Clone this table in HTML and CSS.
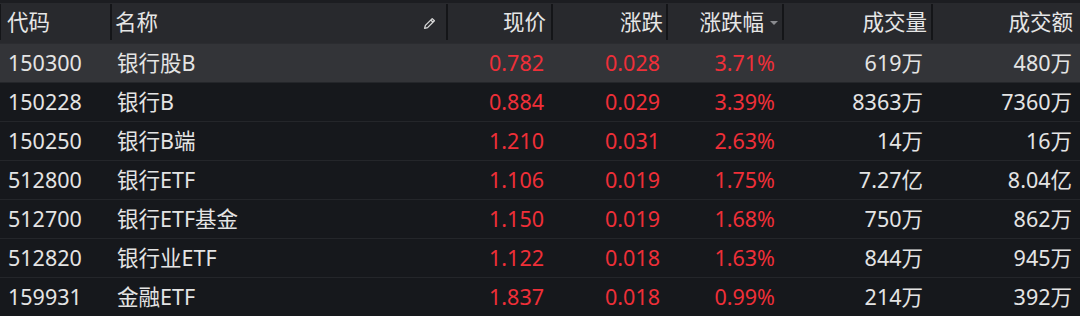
FILE: index.html
```html
<!DOCTYPE html>
<html lang="zh-CN">
<head>
<meta charset="utf-8">
<link rel="stylesheet" href="styles.css">
</head>
<body>
<div class="quote-table">
  <div class="head">
    <div class="hc left c-code">代码</div>
    <div class="hc left c-name">名称
      <svg class="pencil" width="13" height="13" viewBox="0 0 13 13"><path d="M9.2 1.6 L11.4 3.8 L4.6 10.6 L1.6 11.4 L2.4 8.4 Z M7.8 3 L10 5.2" fill="none" stroke="#d8d8d8" stroke-width="1.3" stroke-linejoin="round"/></svg>
    </div>
    <div class="hc right c-price">现价</div>
    <div class="hc right c-chg">涨跌</div>
    <div class="hc right c-pct">涨跌幅<span class="sort"></span></div>
    <div class="hc right c-vol">成交量</div>
    <div class="hc right c-amt">成交额</div>
  </div>
  <div class="row active">
    <div class="c left c-code">150300</div><div class="c left c-name">银行股B</div>
    <div class="c right up c-price">0.782</div><div class="c right up c-chg">0.028</div><div class="c right up c-pct">3.71%</div>
    <div class="c right c-vol">619万</div><div class="c right c-amt">480万</div>
  </div>
  <div class="row">
    <div class="c left c-code">150228</div><div class="c left c-name">银行B</div>
    <div class="c right up c-price">0.884</div><div class="c right up c-chg">0.029</div><div class="c right up c-pct">3.39%</div>
    <div class="c right c-vol">8363万</div><div class="c right c-amt">7360万</div>
  </div>
  <div class="row">
    <div class="c left c-code">150250</div><div class="c left c-name">银行B端</div>
    <div class="c right up c-price">1.210</div><div class="c right up c-chg">0.031</div><div class="c right up c-pct">2.63%</div>
    <div class="c right c-vol">14万</div><div class="c right c-amt">16万</div>
  </div>
  <div class="row">
    <div class="c left c-code">512800</div><div class="c left c-name">银行ETF</div>
    <div class="c right up c-price">1.106</div><div class="c right up c-chg">0.019</div><div class="c right up c-pct">1.75%</div>
    <div class="c right c-vol">7.27亿</div><div class="c right c-amt">8.04亿</div>
  </div>
  <div class="row">
    <div class="c left c-code">512700</div><div class="c left c-name">银行ETF基金</div>
    <div class="c right up c-price">1.150</div><div class="c right up c-chg">0.019</div><div class="c right up c-pct">1.68%</div>
    <div class="c right c-vol">750万</div><div class="c right c-amt">862万</div>
  </div>
  <div class="row">
    <div class="c left c-code">512820</div><div class="c left c-name">银行业ETF</div>
    <div class="c right up c-price">1.122</div><div class="c right up c-chg">0.018</div><div class="c right up c-pct">1.63%</div>
    <div class="c right c-vol">844万</div><div class="c right c-amt">945万</div>
  </div>
  <div class="row">
    <div class="c left c-code">159931</div><div class="c left c-name">金融ETF</div>
    <div class="c right up c-price">1.837</div><div class="c right up c-chg">0.018</div><div class="c right up c-pct">0.99%</div>
    <div class="c right c-vol">214万</div><div class="c right c-amt">392万</div>
  </div>
</div>
</body>
</html>
```
FILE: styles.css
```css
html, body {
  margin: 0;
  padding: 0;
  background: #16181c;
}
.quote-table {
  width: 1080px;
  font-family: "Noto Sans", "Noto Sans CJK SC", sans-serif;
  font-size: 21.5px;
  color: #e4e4e4;
}
.head, .row {
  display: grid;
  grid-template-columns: 112px 336px 105px 115px 116px 149px 1fr;
}
.head {
  height: 40px;
  border-top: 3px solid #1c1d21;
  background: #28292d;
}
.hc {
  display: flex;
  align-items: center;
  margin: 1px 0 3px;
  border-right: 2px solid #141518;
  line-height: 1;
  color: #e6e6e6;
}
.hc.c-code { border-left: 1px solid #141518; }
.hc.c-amt { border-right: none; }
.row {
  height: 38px;
  border-top: 1px solid #24262a;
  background: #16181c;
}
.row.active { background: #333438; border-top-color: #2b2c30; }
.c {
  display: flex;
  align-items: center;
  line-height: 1;
  white-space: nowrap;
}
.left { justify-content: flex-start; }
.right { justify-content: flex-end; }
.up { color: #ef2f38; }

.hc.c-code { padding-left: 6px; }
.c.c-code { padding-left: 8px; }
.hc.c-name { padding-left: 3px; position: relative; }
.c.c-name { padding-left: 5px; }
.hc.c-price { padding-right: 5px; }
.c.c-price { padding-right: 9px; }
.hc.c-chg { padding-right: 3px; }
.c.c-chg { padding-right: 8px; }
.hc.c-pct { padding-right: 4px; }
.c.c-pct { padding-right: 9px; }
.hc.c-vol { padding-right: 4px; }
.c.c-vol { padding-right: 10px; }
.hc.c-amt { padding-right: 7px; }
.c.c-amt { padding-right: 8px; }

.pencil {
  position: absolute;
  right: 10px;
  top: 13px;
}
.sort {
  display: inline-block;
  width: 0;
  height: 0;
  margin-left: 6px;
  margin-top: 1px;
  border-left: 4px solid transparent;
  border-right: 4px solid transparent;
  border-top: 4px solid #8a8b8f;
}
```
